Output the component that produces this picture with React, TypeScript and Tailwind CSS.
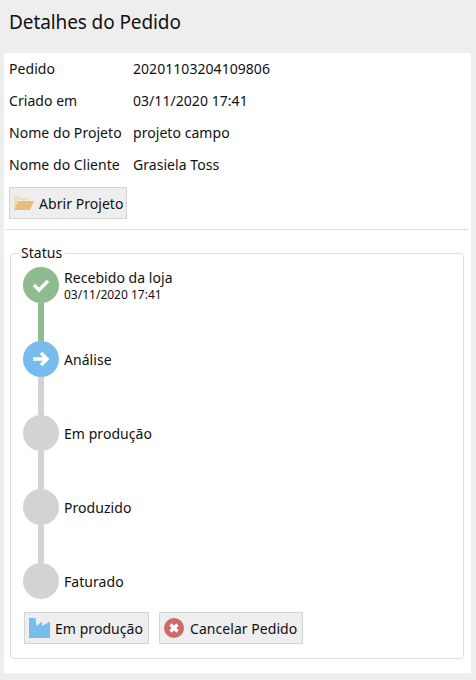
import React from "react";

const font = { fontFamily: '"Noto Sans", "Open Sans", sans-serif' };

function Info({ label, value }: { label: string; value: string }) {
  return (
    <div className="flex h-8 items-center text-[14px] text-[#111] tracking-[0.05px]">
      <div className="w-[124px]">{label}</div>
      <div>{value}</div>
    </div>
  );
}

function Btn({ icon, label, w, iconW }: { icon: React.ReactNode; label: string; w: string; iconW: string }) {
  return (
    <div className={`flex h-8 ${w} items-center border border-[#d4d4d4] bg-[#eeeeee] pl-[4px] text-[14px] text-[#111] tracking-[0.05px]`}>
      <span className={`flex shrink-0 justify-start ${iconW}`}>{icon}</span>
      <span className="whitespace-nowrap">{label}</span>
    </div>
  );
}

function Step({
  color,
  bar,
  barColor,
  label,
  sub,
  icon,
}: {
  color: string;
  bar: boolean;
  barColor?: string;
  label: string;
  sub?: string;
  icon?: React.ReactNode;
}) {
  return (
    <div className={`flex ${bar ? "h-[74px]" : "h-9"}`}>
      <div className="flex w-9 flex-col items-center">
        <div className={`flex h-9 w-9 shrink-0 items-center justify-center rounded-full ${color}`}>{icon}</div>
        {bar && <div className={`w-[6px] flex-1 ${barColor}`} />}
      </div>
      <div className={`ml-[5px] flex h-9 flex-col justify-center text-[14px] text-[#111] tracking-[0.05px] ${sub ? "" : "pt-[2px]"}`}>
        <div className="leading-[20px]">{label}</div>
        {sub && <div className="text-[12px] leading-[14px] tracking-[0px]">{sub}</div>}
      </div>
    </div>
  );
}

export default function App() {
  return (
    <div className="h-[680px] w-[476px] overflow-hidden bg-[#eeeeee]" style={font}>
      <div className="flex h-[53px] items-start pl-[9px] pt-[9px] text-[19px] leading-[26px] text-[#111] tracking-[-0.1px]">
        Detalhes do Pedido
      </div>
      <div className="ml-1 h-[620px] w-[467px] bg-white">
        <div className="pl-[5px]">
          <div className="-translate-y-px">
            <Info label="Pedido" value="20201103204109806" />
            <Info label="Criado em" value="03/11/2020 17:41" />
            <Info label="Nome do Projeto" value="projeto campo" />
            <Info label="Nome do Cliente" value="Grasiela Toss" />
          </div>
          <div className="mt-[6px]">
            <Btn
              w="w-[118px]"
              iconW="w-[25px]"
              label="Abrir Projeto"
              icon={
                <svg width="20" height="16" viewBox="0 0 20 16">
                  <path d="M0 15V2.5L1 1.5H6L7.5 3H15V5H4.5L0 15Z" fill="#f3dcb6" />
                  <path d="M0 15L4 6H20L16 15H0Z" fill="#e9bc7d" />
                </svg>
              }
            />
          </div>
        </div>
        <div className="ml-[2px] mt-[10px] h-px w-[462px] bg-[#d6dde3]" />
        <fieldset className="ml-[6px] mt-[13px] h-[416px] w-[454px] rounded-[4px] border border-[#d3dfe9] pl-[12px] pt-[4px]">
          <legend className="-ml-[5px] px-[3px] text-[14px] leading-[20px] text-[#111] tracking-[0.05px]">Status</legend>
          <Step
            color="bg-[#8fbc8f]"
            bar
            barColor="bg-[#8fbc8f]"
            label="Recebido da loja"
            sub="03/11/2020 17:41"
            icon={
              <svg width="20" height="16" viewBox="0 0 20 16">
                <path d="M3 8L8 13L17 4" fill="none" stroke="#fff" strokeWidth="3.4" />
              </svg>
            }
          />
          <Step
            color="bg-[#76bced]"
            bar
            barColor="bg-[#d3d3d3]"
            label="Análise"
            icon={
              <svg width="20" height="18" viewBox="0 0 20 18">
                <path d="M2 9H15M10 3L16 9L10 15" fill="none" stroke="#fff" strokeWidth="3.4" />
              </svg>
            }
          />
          <Step color="bg-[#d3d3d3]" bar barColor="bg-[#d3d3d3]" label="Em produção" />
          <Step color="bg-[#d3d3d3]" bar barColor="bg-[#d3d3d3]" label="Produzido" />
          <Step color="bg-[#d3d3d3]" bar={false} label="Faturado" />
          <div className="mt-[13px] flex gap-[10px] pl-px">
            <Btn
              w="w-[125px]"
              iconW="w-[26px]"
              label="Em produção"
              icon={
                <svg width="21" height="20" viewBox="0 0 21 20">
                  <path d="M0 0H6.5L7.5 8L13 3.5V8L21 3.5V20H0Z" fill="#76bced" />
                </svg>
              }
            />
            <Btn
              w="w-[144px]"
              iconW="w-[26px]"
              label="Cancelar Pedido"
              icon={
                <svg width="20" height="20" viewBox="0 0 20 20">
                  <circle cx="10" cy="10" r="10" fill="#cd6b6b" />
                  <path d="M6.5 6.5L13.5 13.5M13.5 6.5L6.5 13.5" stroke="#fff" strokeWidth="3.2" />
                </svg>
              }
            />
          </div>
        </fieldset>
      </div>
    </div>
  );
}
